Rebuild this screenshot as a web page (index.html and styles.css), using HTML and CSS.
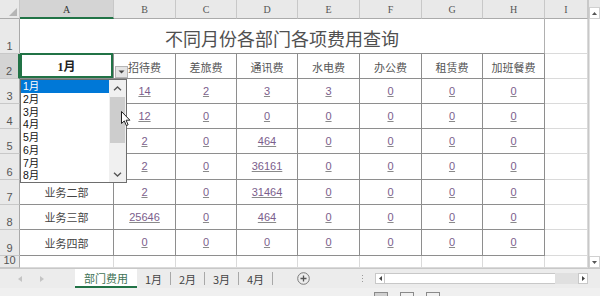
FILE: index.html
```html
<!DOCTYPE html>
<html lang="zh-CN">
<head>
<meta charset="utf-8">
<title>部门费用</title>
<link rel="stylesheet" href="styles.css">
</head>
<body>
<div class="app">
  <div class="main">
    <div class="sheet">
      <div class="corner"><span class="tri"></span></div>
      <div class="ch sel">A</div><div class="ch">B</div><div class="ch">C</div><div class="ch">D</div><div class="ch">E</div><div class="ch">F</div><div class="ch">G</div><div class="ch">H</div><div class="ch">I</div>

      <div class="rh">1</div>
      <div class="title">不同月份各部门各项费用查询</div>
      <div class="c"></div>

      <div class="rh sel">2</div>
      <div class="t cur">
        <span class="month">1月</span>
        <span class="ddbtn"><svg width="7" height="4" viewBox="0 0 7 4"><path d="M0.5 0.5h6l-3 3z" fill="#444"/></svg></span>
        <div class="dd">
          <ul class="ddlist">
            <li class="on">1月</li><li>2月</li><li>3月</li><li>4月</li><li>5月</li><li>6月</li><li>7月</li><li>8月</li>
          </ul>
          <div class="ddsb">
            <span class="ddarr"><svg width="9" height="5" viewBox="0 0 9 5"><path d="M1 4.3L4.5 1 8 4.3" fill="none" stroke="#555" stroke-width="1.3"/></svg></span>
            <span class="ddthumb"></span>
            <span class="ddtrack"></span>
            <span class="ddarr"><svg width="9" height="5" viewBox="0 0 9 5"><path d="M1 0.7L4.5 4 8 0.7" fill="none" stroke="#555" stroke-width="1.3"/></svg></span>
          </div>
        </div>
      </div>
      <div class="t hd">招待费</div><div class="t hd">差旅费</div><div class="t hd">通讯费</div><div class="t hd">水电费</div><div class="t hd">办公费</div><div class="t hd">租赁费</div><div class="t hd">加班餐费</div>
      <div class="c"></div>

      <div class="rh">3</div>
      <div class="t lbl"></div>
      <div class="t n"><a>14</a></div><div class="t n"><a>2</a></div><div class="t n"><a>3</a></div><div class="t n"><a>3</a></div><div class="t n"><a>0</a></div><div class="t n"><a>0</a></div><div class="t n"><a>0</a></div>
      <div class="c"></div>

      <div class="rh">4</div>
      <div class="t lbl"></div>
      <div class="t n"><a>12</a></div><div class="t n"><a>0</a></div><div class="t n"><a>0</a></div><div class="t n"><a>0</a></div><div class="t n"><a>0</a></div><div class="t n"><a>0</a></div><div class="t n"><a>0</a></div>
      <div class="c"></div>

      <div class="rh">5</div>
      <div class="t lbl"></div>
      <div class="t n"><a>2</a></div><div class="t n"><a>0</a></div><div class="t n"><a>464</a></div><div class="t n"><a>0</a></div><div class="t n"><a>0</a></div><div class="t n"><a>0</a></div><div class="t n"><a>0</a></div>
      <div class="c"></div>

      <div class="rh">6</div>
      <div class="t lbl"></div>
      <div class="t n"><a>2</a></div><div class="t n"><a>0</a></div><div class="t n"><a>36161</a></div><div class="t n"><a>0</a></div><div class="t n"><a>0</a></div><div class="t n"><a>0</a></div><div class="t n"><a>0</a></div>
      <div class="c"></div>

      <div class="rh">7</div>
      <div class="t lbl">业务二部</div>
      <div class="t n"><a>2</a></div><div class="t n"><a>0</a></div><div class="t n"><a>31464</a></div><div class="t n"><a>0</a></div><div class="t n"><a>0</a></div><div class="t n"><a>0</a></div><div class="t n"><a>0</a></div>
      <div class="c"></div>

      <div class="rh">8</div>
      <div class="t lbl">业务三部</div>
      <div class="t n"><a>25646</a></div><div class="t n"><a>0</a></div><div class="t n"><a>464</a></div><div class="t n"><a>0</a></div><div class="t n"><a>0</a></div><div class="t n"><a>0</a></div><div class="t n"><a>0</a></div>
      <div class="c"></div>

      <div class="rh">9</div>
      <div class="t lbl">业务四部</div>
      <div class="t n"><a>0</a></div><div class="t n"><a>0</a></div><div class="t n"><a>0</a></div><div class="t n"><a>0</a></div><div class="t n"><a>0</a></div><div class="t n"><a>0</a></div><div class="t n"><a>0</a></div>
      <div class="c"></div>

      <div class="rh">10</div>
      <div class="c"></div><div class="c"></div><div class="c"></div><div class="c"></div><div class="c"></div><div class="c"></div><div class="c"></div><div class="c"></div><div class="c"></div>
    </div>

    <div class="vscroll">
      <span class="vbtn"><svg width="5" height="3" viewBox="0 0 5 3"><path d="M0 3h5L2.5 0z" fill="#555"/></svg></span>
      <span class="vthumb"></span>
      <span class="vbtn"><svg width="5" height="3" viewBox="0 0 5 3"><path d="M0 0h5L2.5 3z" fill="#555"/></svg></span>
    </div>

    <svg class="cursor" width="10" height="16" viewBox="0 0 10 16"><path d="M0.5 0.5V12.5L3.3 9.9 5.3 14.6 7.1 13.8 5.1 9.2H8.9Z" fill="#fff" stroke="#222" stroke-width="1" stroke-linejoin="round"/></svg>
  </div>

  <div class="tabbar">
    <div class="nav">
      <svg width="4" height="6" viewBox="0 0 4 6"><path d="M4 0V6L0 3z" fill="#c4c4c4"/></svg>
      <svg width="4" height="6" viewBox="0 0 4 6"><path d="M0 0V6L4 3z" fill="#c4c4c4"/></svg>
    </div>
    <div class="tab on">部门费用</div>
    <div class="tab">1月</div><span class="sep"></span>
    <div class="tab">2月</div><span class="sep"></span>
    <div class="tab">3月</div><span class="sep"></span>
    <div class="tab">4月</div><span class="sep"></span>
    <span class="add"><svg width="13" height="13" viewBox="0 0 13 13"><circle cx="6.5" cy="6.5" r="5.8" fill="none" stroke="#7a7a7a" stroke-width="1"/><path d="M6.5 3.5v6M3.5 6.5h6" stroke="#555" stroke-width="1.3"/></svg></span>
    <span class="dots"><i></i><i></i><i></i></span>
    <div class="hscroll">
      <span class="hbtn"><svg width="3" height="5" viewBox="0 0 3 5"><path d="M3 0V5L0 2.5z" fill="#444"/></svg></span>
      <span class="htrack"></span>
      <span class="hrest"></span>
      <span class="hbtn"><svg width="3" height="5" viewBox="0 0 3 5"><path d="M0 0V5L3 2.5z" fill="#444"/></svg></span>
    </div>
  </div>

  <div class="status">
    <span class="views"><i class="v on"></i><i class="v"></i><i class="v"></i></span>
  </div>
</div>
</body>
</html>
```

FILE: styles.css
```css
* { box-sizing: border-box; margin: 0; padding: 0; }
html, body { width: 600px; height: 296px; overflow: hidden; background: #fff; }
body { font-family: "Noto Sans CJK SC", "Liberation Sans", sans-serif; color: #444; }

.app { display: flex; flex-direction: column; width: 600px; }
.main { display: flex; height: 268px; position: relative; }

.sheet {
  display: grid;
  width: 588px;
  grid-template-columns: 20px 94px 62px 61px 61px 62px 62px 61px 62px 43px;
  grid-template-rows: 19px 35px 25px 25px 25px 25px 26px 25px 25px 26px 12px;
}

.corner { background: #e9e9e9; border-right: 1px solid #c8c8c8; border-bottom: 1px solid #ababab; position: relative; }
.corner .tri { position: absolute; right: 2px; bottom: 2px; width: 0; height: 0; border-left: 8px solid transparent; border-bottom: 8px solid #b5b5b5; }

.ch {
  background: #e9e9e9; border-right: 1px solid #c8c8c8; border-bottom: 1px solid #ababab;
  display: flex; align-items: flex-end; justify-content: center;
  font: 10px/13px "Liberation Serif", serif; color: #555; padding-bottom: 2px;
}
.ch.sel { background: #d4d4d4; border-bottom: 2px solid #217346; padding-bottom: 1px; color: #333; }

.rh {
  background: #e9e9e9; border-right: 1px solid #a9a9a9; border-bottom: 1px solid #c8c8c8;
  display: flex; align-items: flex-end; justify-content: center;
  font: 11px/12px "Liberation Sans", sans-serif; color: #555; padding-bottom: 1px;
}
.rh.sel { background: #d4d4d4; border-right: 2px solid #217346; }

.c { border-right: 1px solid #dadada; border-bottom: 1px solid #dadada; }

.title {
  grid-column: 2 / 10;
  border-right: 1px solid #b0b0b0; border-bottom: 1px solid #8e8e8e;
  display: flex; align-items: center; justify-content: center;
  font-size: 18px; color: #505050; padding-top: 3px;
}

.t {
  border-right: 1px solid #8e8e8e; border-bottom: 1px solid #8e8e8e;
  display: flex; align-items: center; justify-content: center;
}
.hd { font-size: 11px; color: #555; padding-top: 1px; }
.lbl { font-size: 11px; color: #444; }
.n { font: 11px/13px "Liberation Sans", sans-serif; }
.n a { color: #7b5e8c; text-decoration: underline; text-decoration-color: #8a8a8a; text-underline-offset: 1px; }

.cur { position: relative; }
.cur::after {
  content: ""; position: absolute; top: -1px; left: 0; right: 0; bottom: 0;
  border: 2px solid #217346; pointer-events: none;
}
.month { font: bold 12px "Liberation Serif", "Noto Sans CJK SC", serif; color: #222; }
.ddbtn {
  position: absolute; left: 95px; top: 12px; width: 13px; height: 12px; z-index: 3;
  background: #e4e4e4; border: 1px solid #b5b5b5;
  display: flex; align-items: center; justify-content: center;
}
.dd {
  position: absolute; left: 0; top: 25px; width: 107px; height: 104px; z-index: 4;
  background: #fff; border: 1px solid #6e6e6e; display: flex; overflow: hidden;
}
.ddlist { flex: 1; list-style: none; }
.ddlist li {
  height: 12.75px; font-family: "Liberation Sans", "Noto Sans CJK SC", sans-serif;
  font-size: 10.5px; line-height: 12.75px; padding-left: 2px; color: #111; overflow: hidden;
}
.ddlist li.on { background: #0078d7; color: #fff; }
.ddsb { width: 17px; background: #f0f0f0; display: flex; flex-direction: column; }
.ddarr { height: 16px; display: flex; align-items: center; justify-content: center; }
.ddthumb { height: 46px; margin: 1px 1px 0; background: #cdcdcd; }
.ddtrack { flex: 1; }

.vscroll {
  width: 12px; background: #e9e9e9; border-left: 1px solid #c8c8c8;
  display: flex; flex-direction: column; padding-top: 7px;
}
.vbtn { height: 12px; background: #fff; border: 1px solid #d0d0d0; display: flex; align-items: center; justify-content: center; }
.vthumb { flex: 1; background: #fff; border-left: 1px solid #e2e2e2; }

.cursor { position: absolute; left: 121px; top: 111px; z-index: 6; }

.tabbar {
  height: 20px; display: flex; align-items: stretch;
  background: #ececec; border-top: 1px solid #c8c8c8;
}
.nav { width: 75px; display: flex; align-items: center; gap: 18px; padding-left: 18px; }
.tab {
  width: 33px; display: flex; align-items: center; justify-content: center;
  font-size: 11px; color: #444;
}
.tab.on {
  width: 62px; background: #fff; color: #3f7356; border-bottom: 2px solid #217346; padding-top: 1px;
}
.sep { width: 1px; height: 13px; align-self: center; background: #a8a8a8; }
.add { margin-left: 24px; display: flex; align-items: center; }
.dots { margin-left: 50px; width: 5px; display: flex; flex-direction: column; justify-content: center; align-items: center; gap: 2px; }
.dots i { display: block; width: 1px; height: 1px; background: #9a9a9a; }
.hscroll { margin-left: 10px; width: 213px; height: 11px; align-self: center; display: flex; }
.hbtn { width: 10px; background: #fff; border: 1px solid #c8c8c8; display: flex; align-items: center; justify-content: center; }
.htrack { width: 170px; background: #fff; border-top: 1px solid #c8c8c8; border-bottom: 1px solid #c8c8c8; }
.hrest { flex: 1; background: #e0e0e0; }

.status { height: 22px; background: #f0f0f0; display: flex; align-items: flex-start; padding-top: 4px; }
.views { margin-left: 374px; display: flex; gap: 12px; }
.v { display: block; width: 14px; height: 10px; border: 1px solid #8a8a8a; }
.v.on { background: #cfcfcf; }
```
